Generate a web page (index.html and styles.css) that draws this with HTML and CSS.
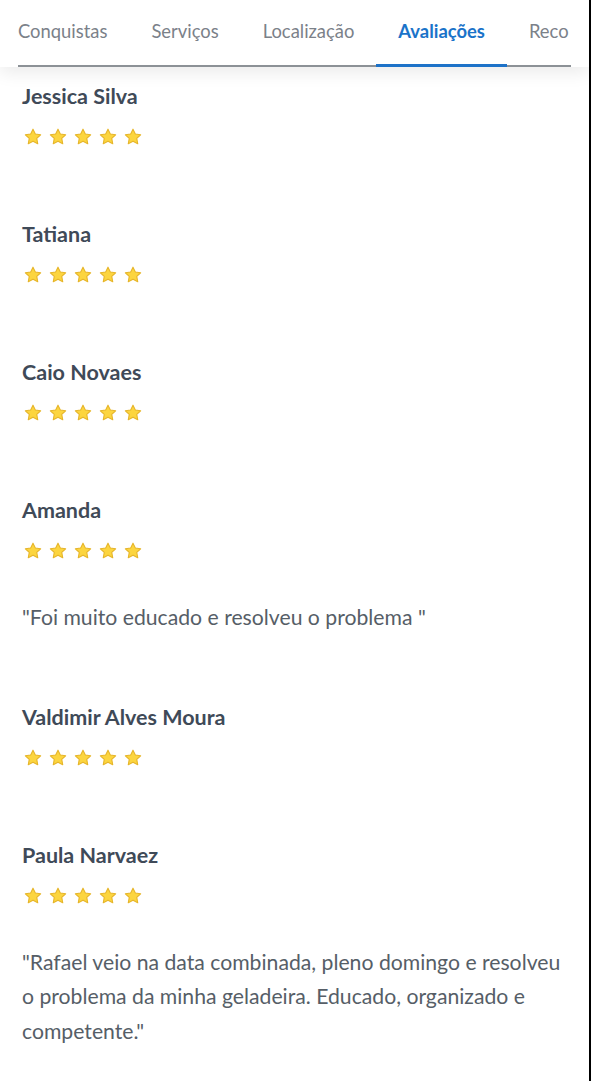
FILE: index.html
```html
<!DOCTYPE html>
<html lang="pt-BR">
<head>
<meta charset="utf-8">
<title>Avaliações</title>
<link rel="stylesheet" href="styles.css">
</head>
<body>
<div class="page">
  <nav class="tabbar">
    <div class="tabs">
      <span class="tab first">Conquistas</span>
      <span class="tab">Serviços</span>
      <span class="tab">Localização</span>
      <span class="tab active">Avaliações</span>
      <span class="tab">Reco</span>
    </div>
  </nav>
  <main class="reviews">
    <section class="review">
      <h3 class="name">Jessica Silva</h3>
      <div class="stars"><svg class="star" viewBox="0 0 24 24"><path d="M12 2.6l2.8 5.9 6.4.8-4.7 4.4 1.2 6.4L12 17l-5.7 3.1 1.2-6.4L2.8 9.3l6.4-.8z"/></svg><svg class="star" viewBox="0 0 24 24"><path d="M12 2.6l2.8 5.9 6.4.8-4.7 4.4 1.2 6.4L12 17l-5.7 3.1 1.2-6.4L2.8 9.3l6.4-.8z"/></svg><svg class="star" viewBox="0 0 24 24"><path d="M12 2.6l2.8 5.9 6.4.8-4.7 4.4 1.2 6.4L12 17l-5.7 3.1 1.2-6.4L2.8 9.3l6.4-.8z"/></svg><svg class="star" viewBox="0 0 24 24"><path d="M12 2.6l2.8 5.9 6.4.8-4.7 4.4 1.2 6.4L12 17l-5.7 3.1 1.2-6.4L2.8 9.3l6.4-.8z"/></svg><svg class="star" viewBox="0 0 24 24"><path d="M12 2.6l2.8 5.9 6.4.8-4.7 4.4 1.2 6.4L12 17l-5.7 3.1 1.2-6.4L2.8 9.3l6.4-.8z"/></svg></div>
    </section>
    <section class="review">
      <h3 class="name">Tatiana</h3>
      <div class="stars"><svg class="star" viewBox="0 0 24 24"><path d="M12 2.6l2.8 5.9 6.4.8-4.7 4.4 1.2 6.4L12 17l-5.7 3.1 1.2-6.4L2.8 9.3l6.4-.8z"/></svg><svg class="star" viewBox="0 0 24 24"><path d="M12 2.6l2.8 5.9 6.4.8-4.7 4.4 1.2 6.4L12 17l-5.7 3.1 1.2-6.4L2.8 9.3l6.4-.8z"/></svg><svg class="star" viewBox="0 0 24 24"><path d="M12 2.6l2.8 5.9 6.4.8-4.7 4.4 1.2 6.4L12 17l-5.7 3.1 1.2-6.4L2.8 9.3l6.4-.8z"/></svg><svg class="star" viewBox="0 0 24 24"><path d="M12 2.6l2.8 5.9 6.4.8-4.7 4.4 1.2 6.4L12 17l-5.7 3.1 1.2-6.4L2.8 9.3l6.4-.8z"/></svg><svg class="star" viewBox="0 0 24 24"><path d="M12 2.6l2.8 5.9 6.4.8-4.7 4.4 1.2 6.4L12 17l-5.7 3.1 1.2-6.4L2.8 9.3l6.4-.8z"/></svg></div>
    </section>
    <section class="review">
      <h3 class="name">Caio Novaes</h3>
      <div class="stars"><svg class="star" viewBox="0 0 24 24"><path d="M12 2.6l2.8 5.9 6.4.8-4.7 4.4 1.2 6.4L12 17l-5.7 3.1 1.2-6.4L2.8 9.3l6.4-.8z"/></svg><svg class="star" viewBox="0 0 24 24"><path d="M12 2.6l2.8 5.9 6.4.8-4.7 4.4 1.2 6.4L12 17l-5.7 3.1 1.2-6.4L2.8 9.3l6.4-.8z"/></svg><svg class="star" viewBox="0 0 24 24"><path d="M12 2.6l2.8 5.9 6.4.8-4.7 4.4 1.2 6.4L12 17l-5.7 3.1 1.2-6.4L2.8 9.3l6.4-.8z"/></svg><svg class="star" viewBox="0 0 24 24"><path d="M12 2.6l2.8 5.9 6.4.8-4.7 4.4 1.2 6.4L12 17l-5.7 3.1 1.2-6.4L2.8 9.3l6.4-.8z"/></svg><svg class="star" viewBox="0 0 24 24"><path d="M12 2.6l2.8 5.9 6.4.8-4.7 4.4 1.2 6.4L12 17l-5.7 3.1 1.2-6.4L2.8 9.3l6.4-.8z"/></svg></div>
    </section>
    <section class="review">
      <h3 class="name">Amanda</h3>
      <div class="stars"><svg class="star" viewBox="0 0 24 24"><path d="M12 2.6l2.8 5.9 6.4.8-4.7 4.4 1.2 6.4L12 17l-5.7 3.1 1.2-6.4L2.8 9.3l6.4-.8z"/></svg><svg class="star" viewBox="0 0 24 24"><path d="M12 2.6l2.8 5.9 6.4.8-4.7 4.4 1.2 6.4L12 17l-5.7 3.1 1.2-6.4L2.8 9.3l6.4-.8z"/></svg><svg class="star" viewBox="0 0 24 24"><path d="M12 2.6l2.8 5.9 6.4.8-4.7 4.4 1.2 6.4L12 17l-5.7 3.1 1.2-6.4L2.8 9.3l6.4-.8z"/></svg><svg class="star" viewBox="0 0 24 24"><path d="M12 2.6l2.8 5.9 6.4.8-4.7 4.4 1.2 6.4L12 17l-5.7 3.1 1.2-6.4L2.8 9.3l6.4-.8z"/></svg><svg class="star" viewBox="0 0 24 24"><path d="M12 2.6l2.8 5.9 6.4.8-4.7 4.4 1.2 6.4L12 17l-5.7 3.1 1.2-6.4L2.8 9.3l6.4-.8z"/></svg></div>
      <p class="comment">"Foi muito educado e resolveu o problema "</p>
    </section>
    <section class="review">
      <h3 class="name">Valdimir Alves Moura</h3>
      <div class="stars"><svg class="star" viewBox="0 0 24 24"><path d="M12 2.6l2.8 5.9 6.4.8-4.7 4.4 1.2 6.4L12 17l-5.7 3.1 1.2-6.4L2.8 9.3l6.4-.8z"/></svg><svg class="star" viewBox="0 0 24 24"><path d="M12 2.6l2.8 5.9 6.4.8-4.7 4.4 1.2 6.4L12 17l-5.7 3.1 1.2-6.4L2.8 9.3l6.4-.8z"/></svg><svg class="star" viewBox="0 0 24 24"><path d="M12 2.6l2.8 5.9 6.4.8-4.7 4.4 1.2 6.4L12 17l-5.7 3.1 1.2-6.4L2.8 9.3l6.4-.8z"/></svg><svg class="star" viewBox="0 0 24 24"><path d="M12 2.6l2.8 5.9 6.4.8-4.7 4.4 1.2 6.4L12 17l-5.7 3.1 1.2-6.4L2.8 9.3l6.4-.8z"/></svg><svg class="star" viewBox="0 0 24 24"><path d="M12 2.6l2.8 5.9 6.4.8-4.7 4.4 1.2 6.4L12 17l-5.7 3.1 1.2-6.4L2.8 9.3l6.4-.8z"/></svg></div>
    </section>
    <section class="review">
      <h3 class="name">Paula Narvaez</h3>
      <div class="stars"><svg class="star" viewBox="0 0 24 24"><path d="M12 2.6l2.8 5.9 6.4.8-4.7 4.4 1.2 6.4L12 17l-5.7 3.1 1.2-6.4L2.8 9.3l6.4-.8z"/></svg><svg class="star" viewBox="0 0 24 24"><path d="M12 2.6l2.8 5.9 6.4.8-4.7 4.4 1.2 6.4L12 17l-5.7 3.1 1.2-6.4L2.8 9.3l6.4-.8z"/></svg><svg class="star" viewBox="0 0 24 24"><path d="M12 2.6l2.8 5.9 6.4.8-4.7 4.4 1.2 6.4L12 17l-5.7 3.1 1.2-6.4L2.8 9.3l6.4-.8z"/></svg><svg class="star" viewBox="0 0 24 24"><path d="M12 2.6l2.8 5.9 6.4.8-4.7 4.4 1.2 6.4L12 17l-5.7 3.1 1.2-6.4L2.8 9.3l6.4-.8z"/></svg><svg class="star" viewBox="0 0 24 24"><path d="M12 2.6l2.8 5.9 6.4.8-4.7 4.4 1.2 6.4L12 17l-5.7 3.1 1.2-6.4L2.8 9.3l6.4-.8z"/></svg></div>
      <p class="comment">"Rafael veio na data combinada, pleno domingo e resolveu o problema da minha geladeira. Educado, organizado e competente."</p>
    </section>
  </main>
</div>
</body>
</html>
```

FILE: styles.css
```css
* { box-sizing: border-box; }

html, body {
  margin: 0;
  padding: 0;
  background: #ffffff;
}

body {
  font-family: Lato, "Open Sans", "Liberation Sans", sans-serif;
  overflow: hidden;
}

.page {
  width: 591px;
  min-height: 1081px;
  border-right: 2px solid #000;
  background: #fff;
}

.tabbar {
  background: #fff;
  padding: 0 18px 0 18px;
  box-shadow: 0 6px 16px rgba(0, 0, 0, 0.08);
  position: relative;
  z-index: 1;
}

.tabs {
  display: flex;
  overflow: hidden;
  white-space: nowrap;
  height: 67px;
  background: linear-gradient(#8c9196, #8c9196) left bottom / 100% 2px no-repeat;
}

.tab {
  flex: none;
  padding: 19px 22px 0 22px;
  font-size: 18.4px;
  line-height: 24px;
  color: #7b8189;
  border-bottom: 3px solid transparent;
}

.tab.first {
  padding-left: 0;
}

.tab.active {
  color: #1a73c9;
  font-weight: 700;
  border-bottom-color: #1d72c8;
}

.reviews {
  padding: 0 22px;
}

.review {
  padding: 15px 0 54px 0;
}

.review:first-child {
  padding-top: 15px;
}

.name {
  margin: 0;
  font-size: 21.5px;
  line-height: 28px;
  font-weight: 700;
  color: #3f4a58;
}

.stars {
  display: flex;
  gap: 5px;
  margin-top: 17px;
  margin-bottom: 4px;
  padding-left: 1px;
  height: 20px;
}

.star {
  width: 20px;
  height: 20px;
  display: block;
}

.star path {
  fill: #fcd53f;
  stroke: #e6b52a;
  stroke-width: 1.3;
  stroke-linejoin: round;
}

.comment {
  margin: 39px 0 -1px 0;
  font-size: 21.2px;
  line-height: 34.5px;
  color: #565e67;
}
```
